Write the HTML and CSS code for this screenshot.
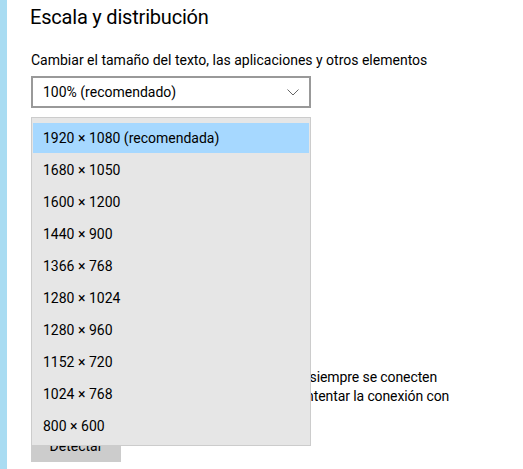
FILE: index.html
```html
<!DOCTYPE html>
<html lang="es">
<head>
<meta charset="utf-8">
<title>Pantalla</title>
<link rel="stylesheet" href="styles.css">
</head>
<body>
<div class="window">
  <div class="strip"></div>
  <main class="content">
    <h2 class="title">Escala y distribución</h2>
    <p class="label">Cambiar el tamaño del texto, las aplicaciones y otros elementos</p>
    <div class="combo">
      <span>100% (recomendado)</span>
      <svg class="chev" width="12" height="7" viewBox="0 0 12 7"><path d="M0.5 0.5 L6 6 L11.5 0.5" fill="none" stroke="#666" stroke-width="1"/></svg>
    </div>
    <p class="para">Es posible que las pantallas más antiguas no siempre se conecten automáticamente. Selecciona Detectar para intentar la conexión con ellas.</p>
    <button class="btn">Detectar</button>

    <ul class="dropdown">
      <li class="sel">1920 × 1080 (recomendada)</li>
      <li>1680 × 1050</li>
      <li>1600 × 1200</li>
      <li>1440 × 900</li>
      <li>1366 × 768</li>
      <li>1280 × 1024</li>
      <li>1280 × 960</li>
      <li>1152 × 720</li>
      <li>1024 × 768</li>
      <li>800 × 600</li>
    </ul>
  </main>
</div>
</body>
</html>
```

FILE: styles.css
```css
html, body {
  margin: 0;
  padding: 0;
  background: #fff;
}
body {
  font-family: "Segoe UI", Roboto, "Noto Sans", sans-serif;
  font-size: 14px;
  color: #000;
}
.window {
  display: flex;
  height: 469px;
  overflow: hidden;
}
.strip {
  width: 7px;
  flex: none;
  background: #a9dcf2;
}
.content {
  position: relative;
  flex: 1;
  padding: 0 0 0 24px;
}
.title {
  margin: 3px 0 0 -1px;
  font-size: 20px;
  font-weight: 400;
  line-height: 28px;
  letter-spacing: -0.2px;
}
.label {
  margin: 19px 0 0 0;
  line-height: 20px;
}
.combo {
  box-sizing: border-box;
  width: 280px;
  height: 32px;
  margin-top: 6px;
  border: 2px solid #999;
  display: flex;
  align-items: center;
  justify-content: space-between;
  padding: 0 10px 0 10px;
}
.para {
  width: 440px;
  margin: 260px 0 0 0;
  line-height: 19px;
  letter-spacing: -0.1px;
}
.btn {
  display: block;
  box-sizing: border-box;
  width: 90px;
  height: 32px;
  margin-top: 5px;
  border: none;
  background: #ccc;
  font: inherit;
  color: #000;
}
.dropdown {
  position: absolute;
  left: 24px;
  top: 117px;
  width: 280px;
  box-sizing: border-box;
  margin: 0;
  padding: 4px 1px 3px 1px;
  list-style: none;
  background: #e6e6e6;
  border: 1px solid #ccc;
}
.dropdown li {
  height: 30px;
  border-top: 1px solid transparent;
  border-bottom: 1px solid transparent;
  background-clip: padding-box;
  line-height: 30px;
  padding-left: 10px;
}
.dropdown li.sel {
  background-color: #a6d8ff;
}
```
